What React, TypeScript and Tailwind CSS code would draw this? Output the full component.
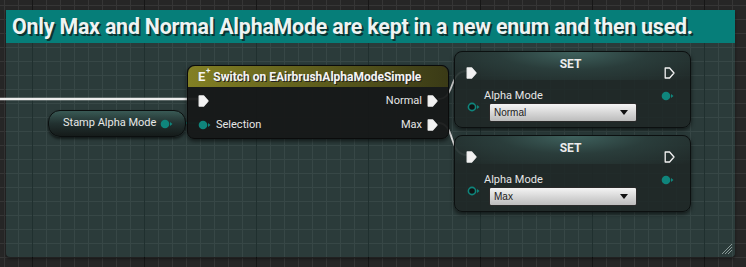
import React from "react";

const TEAL = "#0f857c";

function ExecPin({ filled = true }: { filled?: boolean }) {
  return (
    <svg width="11" height="12" viewBox="0 0 11 12" className="block">
      <path
        d="M1.2 1 H5.6 L10 6 L5.6 11 H1.2 Z"
        fill={filled ? "#f2f2f2" : "none"}
        stroke="#f2f2f2"
        strokeWidth="1.3"
        strokeLinejoin="round"
      />
    </svg>
  );
}

function DataPin({ hollow = false }: { hollow?: boolean }) {
  return (
    <svg width="13" height="10" viewBox="0 0 13 10" className="block">
      {hollow ? (
        <circle cx="5" cy="5" r="3.6" fill="#101414" stroke={TEAL} strokeWidth="1.6" />
      ) : (
        <circle cx="5" cy="5" r="4.3" fill={TEAL} />
      )}
      <path d="M10 3 L12.5 5 L10 7 Z" fill={TEAL} />
    </svg>
  );
}

function Dropdown({ value }: { value: string }) {
  return (
    <div className="ml-[5px] flex h-[19px] w-[148px] items-center justify-between rounded-[2px] border border-[#2a2a2a] bg-gradient-to-b from-[#f4f4f4] to-[#bcbcbc] pl-[4px] pr-[8px] font-['Liberation_Sans',sans-serif] text-[10px] text-[#1c1c1c]">
      <span>{value}</span>
      <svg width="8" height="5" viewBox="0 0 8 5">
        <path d="M0 0 H8 L4 5 Z" fill="#111" />
      </svg>
    </div>
  );
}

function SetNode({ top, value }: { top: string; value: string }) {
  return (
    <div
      className={`absolute left-[454px] ${top} h-[77px] w-[237px] rounded-[8px] border border-[#0c1010] bg-[#1f2827]/90 shadow-[0_2px_4px_rgba(0,0,0,0.6)]`}
    >
      <div className="flex h-[28px] items-start rounded-t-[8px] bg-[radial-gradient(ellipse_at_50%_0%,#3f625e_0%,#2a3d3b_45%,rgba(31,40,39,0)_100%)] px-[11px]">
        <div className="mt-[15px]">
          <ExecPin />
        </div>
        <div className="flex-1 pt-[5px] text-center text-[12px] font-bold leading-[14px] text-[#ececec]">
          SET
        </div>
        <div className="mt-[15px] mr-[4px]">
          <ExecPin filled={false} />
        </div>
      </div>
      <div className="flex items-start pl-[12px] pr-[13px]">
        <div className="mt-[22px]">
          <DataPin hollow />
        </div>
        <div className="ml-[4px] mt-[9px] flex flex-col">
          <div className="text-[11px] leading-[14px] text-[#e6e6e6]">Alpha Mode</div>
          <Dropdown value={value} />
        </div>
        <div className="flex-1" />
        <div className="mt-[11px] mr-[3px]">
          <DataPin />
        </div>
      </div>
    </div>
  );
}

export default function App() {
  return (
    <div className="relative h-[267px] w-[746px] overflow-hidden bg-[#262626] font-['Roboto',sans-serif] bg-[linear-gradient(to_right,#171717_1px,transparent_1px),linear-gradient(to_right,#363636_1px,transparent_1px),linear-gradient(to_bottom,#363636_1px,transparent_1px)] bg-[size:112px_112px,14px_14px,14px_14px] bg-[position:32px_0,4px_5px,4px_5px]">
      {/* comment box */}
      <div className="absolute left-[6px] top-[10px] flex h-[247px] w-[729px] flex-col rounded-b-[4px] shadow-[0_2px_3px_rgba(0,0,0,0.45)]">
        <div className="flex h-[33px] items-center bg-[#067e79] pl-[6px]">
          <span className="origin-left scale-x-[0.97] whitespace-nowrap text-[22px] font-bold tracking-[-0.2px] text-[#eef3f2] [text-shadow:2px_2px_0_#0a3432]">
            Only Max and Normal AlphaMode are kept in a new enum and then used.
          </span>
        </div>
        <div className="flex flex-1 items-end justify-end rounded-b-[4px] bg-[#3a7a76]/25 p-[2px]">
          <svg width="12" height="12" viewBox="0 0 12 12">
            <path d="M1 11 L11 1 M4 11 L11 4 M7 11 L11 7" stroke="#8a9a98" strokeWidth="1" />
          </svg>
        </div>
      </div>

      {/* wires */}
      <svg className="absolute left-0 top-0" width="746" height="267">
        <path d="M0 99 H198" stroke="#ededed" strokeWidth="2.6" fill="none" />
        <path d="M166 123 H200" stroke={TEAL} strokeWidth="1.4" fill="none" />
        <path d="M438 99 C456 99 448 71 467 71" stroke="#e6e6e6" strokeWidth="1.8" fill="none" />
        <path d="M438 123 C456 123 448 155 467 155" stroke="#e6e6e6" strokeWidth="1.8" fill="none" />
      </svg>

      {/* Stamp Alpha Mode getter */}
      <div className="absolute left-[48px] top-[110px] flex h-[27px] w-[138px] items-center justify-between rounded-[12px] border border-[#0b0f0f] bg-gradient-to-b from-[#395a55] via-[#223130] to-[#151b1a] pl-[14px] pr-[12px] shadow-[0_2px_3px_rgba(0,0,0,0.6)]">
        <span className="text-[11px] text-[#e8e8e8]">Stamp Alpha Mode</span>
        <DataPin />
      </div>

      {/* Switch node */}
      <div className="absolute left-[187px] top-[65px] h-[74px] w-[262px] rounded-[7px] border border-[#0a0b0b] bg-[#161818]/95 shadow-[0_2px_4px_rgba(0,0,0,0.6)]">
        <div className="flex h-[21px] items-center rounded-t-[7px] bg-gradient-to-r from-[#838024] via-[#5e5d1c] to-[#3a3a16] pl-[10px]">
          <span className="relative text-[13px] font-bold leading-none text-[#f2f2f2]">
            E<span className="absolute -right-[5px] -top-[3px] text-[8px]">+</span>
          </span>
          <span className="ml-[8px] text-[12px] font-bold text-[#f4f4f4] [text-shadow:1px_1px_0_#222]">
            Switch on EAirbrushAlphaModeSimple
          </span>
        </div>
        <div className="flex flex-col gap-[12px] pl-[10px] pr-[10px] pt-[8px]">
          <div className="flex h-[12px] items-center justify-between">
            <ExecPin />
            <div className="flex items-center gap-[5px]">
              <span className="text-[11px] text-[#e6e6e6]">Normal</span>
              <ExecPin />
            </div>
          </div>
          <div className="flex h-[12px] items-center justify-between">
            <div className="flex items-center gap-[5px]">
              <DataPin />
              <span className="text-[11px] text-[#e6e6e6]">Selection</span>
            </div>
            <div className="flex items-center gap-[5px]">
              <span className="text-[11px] text-[#e6e6e6]">Max</span>
              <ExecPin />
            </div>
          </div>
        </div>
      </div>

      <SetNode top="top-[51px]" value="Normal" />
      <SetNode top="top-[135px]" value="Max" />
    </div>
  );
}
